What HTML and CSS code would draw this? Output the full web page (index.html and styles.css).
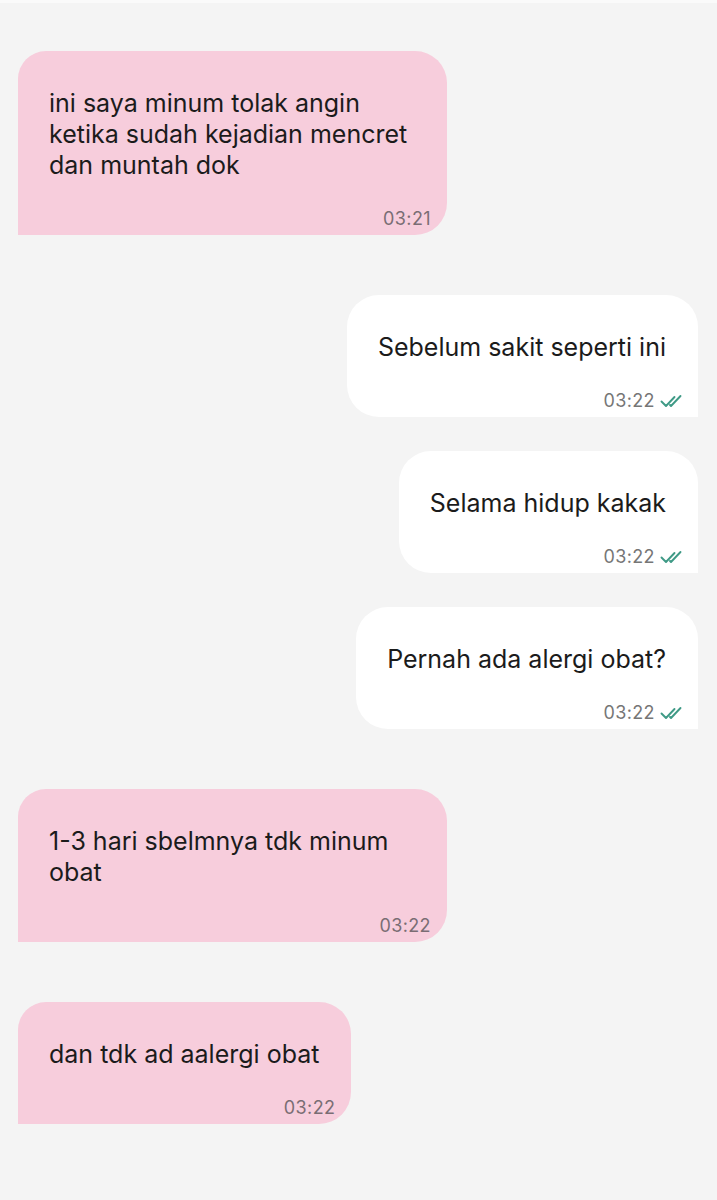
FILE: index.html
```html
<!DOCTYPE html>
<html lang="id">
<head>
<meta charset="utf-8">
<title>Chat</title>
<link rel="stylesheet" href="styles.css">
</head>
<body>
<main class="chat">
  <section class="group">
    <div class="bubble in wide">
      <p class="text">ini saya minum tolak angin ketika sudah kejadian mencret dan muntah dok</p>
      <div class="meta"><span class="time">03:21</span></div>
    </div>
  </section>
  <section class="group">
    <div class="bubble out">
      <p class="text">Sebelum sakit seperti ini</p>
      <div class="meta"><span class="time">03:22</span><svg class="tick" viewBox="0 0 22 14"><path d="M1.5 7.5l4.5 4.5L14.5 3M10 11l1 1L20.5 2"/></svg></div>
    </div>
    <div class="bubble out">
      <p class="text">Selama hidup kakak</p>
      <div class="meta"><span class="time">03:22</span><svg class="tick" viewBox="0 0 22 14"><path d="M1.5 7.5l4.5 4.5L14.5 3M10 11l1 1L20.5 2"/></svg></div>
    </div>
    <div class="bubble out">
      <p class="text">Pernah ada alergi obat?</p>
      <div class="meta"><span class="time">03:22</span><svg class="tick" viewBox="0 0 22 14"><path d="M1.5 7.5l4.5 4.5L14.5 3M10 11l1 1L20.5 2"/></svg></div>
    </div>
  </section>
  <section class="group">
    <div class="bubble in wide">
      <p class="text">1-3 hari sbelmnya tdk minum obat</p>
      <div class="meta"><span class="time">03:22</span></div>
    </div>
  </section>
  <section class="group">
    <div class="bubble in">
      <p class="text">dan tdk ad aalergi obat</p>
      <div class="meta"><span class="time">03:22</span></div>
    </div>
  </section>
</main>
</body>
</html>
```

FILE: styles.css
```css
html, body {
  margin: 0;
  padding: 0;
  background: #f4f4f4;
}
body {
  min-height: 1200px;
  border-top: 3px solid #fafafa;
  box-sizing: border-box;
  font-family: Inter, Roboto, "Liberation Sans", Arial, sans-serif;
  color: #1b1b1b;
}
.chat {
  display: flex;
  flex-direction: column;
  gap: 60px;
  padding: 48px 19px 60px 18px;
}
.group {
  display: flex;
  flex-direction: column;
  gap: 34px;
}
.bubble {
  box-sizing: border-box;
  padding: 37px 16px 6px 31px;
  width: fit-content;
  max-width: 429px;
}
.bubble.in {
  align-self: flex-start;
  background: #f7cddc;
  border-radius: 28px 32px 32px 0;
}
.bubble.in.wide {
  width: 429px;
}
.bubble.out {
  align-self: flex-end;
  background: #ffffff;
  border-radius: 32px 32px 0 32px;
}
.text {
  margin: 0;
  padding-right: 16px;
  font-size: 25px;
  line-height: 31px;
}
.meta {
  margin-top: 28px;
  display: flex;
  justify-content: flex-end;
  align-items: center;
  gap: 5px;
  height: 20px;
}
.time {
  font-size: 18px;
  line-height: 20px;
  letter-spacing: 0.4px;
  color: #767676;
}
.bubble.in .time {
  color: #7a6d74;
}
.tick {
  width: 22px;
  height: 14px;
  fill: none;
  stroke: #3f9a86;
  stroke-width: 1.9;
  stroke-linecap: round;
  stroke-linejoin: round;
}
```
